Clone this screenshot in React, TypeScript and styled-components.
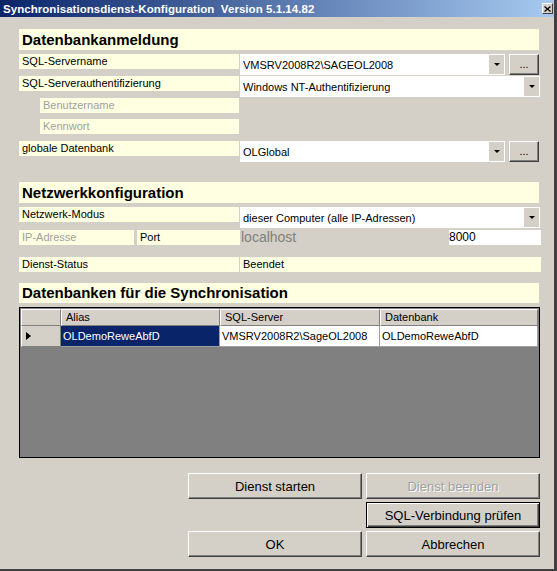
import React from 'react';
import styled, { createGlobalStyle } from 'styled-components';

const GlobalStyle = createGlobalStyle`
  html, body {
    margin: 0;
    padding: 0;
    background: #d4d0c8;
  }
  body {
    font-family: "Liberation Sans", Arial, sans-serif;
  }
  * {
    box-sizing: border-box;
  }
`;

const LABEL_BG = '#ffffe1';

export default function App() {
  return (
    <>
      <GlobalStyle />
      <Window>
        <TitleBar>
          <TitleText>Synchronisationsdienst-Konfiguration&nbsp;&nbsp;Version 5.1.14.82</TitleText>
          <CloseButton>
            <svg width="7" height="6" viewBox="0 0 7 6">
              <path d="M0.5 0.5 L6.5 5.5 M6.5 0.5 L0.5 5.5" stroke="#000" strokeWidth="1.3" />
            </svg>
          </CloseButton>
        </TitleBar>

        <Body>
          <SectionHeader $top={0}>Datenbankanmeldung</SectionHeader>

          <Row $top={4}>
            <FieldLabel $width={220}>SQL-Servername</FieldLabel>
            <ComboBox $width={265} $height={21}>
              <ComboText>VMSRV2008R2\SAGEOL2008</ComboText>
              <DropButton><Arrow /></DropButton>
            </ComboBox>
            <EllipsisButton>...</EllipsisButton>
          </Row>

          <Row $top={1}>
            <FieldLabel $width={220}>SQL-Serverauthentifizierung</FieldLabel>
            <ComboBox $width={300} $height={21}>
              <ComboText>Windows NT-Authentifizierung</ComboText>
              <DropButton><Arrow /></DropButton>
            </ComboBox>
          </Row>

          <Row $top={1} $indent={21}>
            <FieldLabel $width={199} $muted>Benutzername</FieldLabel>
          </Row>

          <Row $top={6} $indent={21}>
            <FieldLabel $width={199} $muted>Kennwort</FieldLabel>
          </Row>

          <Row $top={7}>
            <FieldLabel $width={220}>globale Datenbank</FieldLabel>
            <ComboBox $width={265} $height={21}>
              <ComboText>OLGlobal</ComboText>
              <DropButton><Arrow /></DropButton>
            </ComboBox>
            <EllipsisButton>...</EllipsisButton>
          </Row>

          <SectionHeader $top={20}>Netzwerkkonfiguration</SectionHeader>

          <Row $top={4}>
            <FieldLabel $width={220}>Netzwerk-Modus</FieldLabel>
            <ComboBox $width={300} $height={21}>
              <ComboText>dieser Computer (alle IP-Adressen)</ComboText>
              <DropButton><Arrow /></DropButton>
            </ComboBox>
          </Row>

          <Row $top={2}>
            <FieldLabel $width={115} $muted>IP-Adresse</FieldLabel>
            <FieldLabel $width={103} $gap={2}>Port</FieldLabel>
            <GhostValue>localhost</GhostValue>
            <TextBox>8000</TextBox>
          </Row>

          <Row $top={12}>
            <FieldLabel $width={220}>Dienst-Status</FieldLabel>
            <FieldLabel $width={301}>Beendet</FieldLabel>
          </Row>

          <SectionHeader $top={11} $height={20}>Datenbanken für die Synchronisation</SectionHeader>

          <GridFrame>
            <GridRow>
              <HeaderCell $width={40} />
              <HeaderCell $width={159}>Alias</HeaderCell>
              <HeaderCell $width={160}>SQL-Server</HeaderCell>
              <HeaderCell $width={158}>Datenbank</HeaderCell>
            </GridRow>
            <GridRow>
              <RowHeader>
                <RowMarker />
              </RowHeader>
              <DataCell $width={159} $selected>OLDemoReweAbfD</DataCell>
              <DataCell $width={160}>VMSRV2008R2\SageOL2008</DataCell>
              <DataCell $width={158}>OLDemoReweAbfD</DataCell>
            </GridRow>
          </GridFrame>

          <ButtonGrid>
            <PushButton>Dienst starten</PushButton>
            <PushButton $disabled>Dienst beenden</PushButton>
            <span />
            <PushButton $default>SQL-Verbindung prüfen</PushButton>
            <PushButton>OK</PushButton>
            <PushButton>Abbrechen</PushButton>
          </ButtonGrid>
        </Body>
      </Window>
    </>
  );
}

const Window = styled.div`
  width: 557px;
  height: 571px;
  background: #d4d0c8;
  border-right: 3px solid #404040;
  border-bottom: 2px solid #404040;
  display: flex;
  flex-direction: column;
  overflow: hidden;
`;

const TitleBar = styled.div`
  height: 17px;
  display: flex;
  align-items: center;
  justify-content: space-between;
  padding: 0 1px 0 3px;
  background: linear-gradient(to right, #0a246a, #a6caf0);
`;

const TitleText = styled.div`
  color: #fff;
  font-weight: bold;
  font-size: 11.5px;
  letter-spacing: 0.05px;
  white-space: nowrap;
`;

const CloseButton = styled.div`
  width: 11px;
  height: 11px;
  display: flex;
  align-items: center;
  justify-content: center;
  background: #d4d0c8;
  border: 1px solid;
  border-color: #fff #404040 #404040 #fff;
`;

const Body = styled.div`
  display: flex;
  flex-direction: column;
  padding: 12px 0 0 19px;
`;

const SectionHeader = styled.div<{ $top: number; $height?: number }>`
  width: 520px;
  height: ${(p) => p.$height ?? 21}px;
  margin-top: ${(p) => p.$top}px;
  padding-left: 3px;
  background: ${LABEL_BG};
  font-size: 15px;
  font-weight: bold;
  line-height: ${(p) => p.$height ?? 21}px;
  color: #000;
`;

const Row = styled.div<{ $top: number; $indent?: number }>`
  display: flex;
  align-items: flex-start;
  margin-top: ${(p) => p.$top}px;
  padding-left: ${(p) => p.$indent ?? 0}px;
`;

const FieldLabel = styled.div<{ $width: number; $muted?: boolean; $gap?: number }>`
  width: ${(p) => p.$width}px;
  height: 15px;
  margin-left: ${(p) => p.$gap ?? 0}px;
  margin-right: 1px;
  padding-left: 3px;
  background: ${LABEL_BG};
  font-size: 11px;
  line-height: 15px;
  color: ${(p) => (p.$muted ? '#a0a0a0' : '#000')};
  white-space: nowrap;
`;

const ComboBox = styled.div<{ $width: number; $height: number }>`
  width: ${(p) => p.$width}px;
  height: ${(p) => p.$height}px;
  display: flex;
  align-items: center;
  justify-content: space-between;
  padding: 1px;
  background: #fff;
`;

const ComboText = styled.div`
  padding-left: 2px;
  padding-top: 1px;
  font-size: 11px;
  color: #000;
  white-space: nowrap;
`;

const DropButton = styled.div`
  width: 15px;
  height: 100%;
  display: flex;
  align-items: center;
  justify-content: center;
  background: #d4d0c8;
`;

const Arrow = styled.div`
  width: 0;
  height: 0;
  border-left: 3px solid transparent;
  border-right: 3px solid transparent;
  border-top: 3px solid #000;
`;

const EllipsisButton = styled.div`
  width: 30px;
  height: 21px;
  margin-left: 4px;
  display: flex;
  align-items: flex-end;
  justify-content: center;
  padding-bottom: 4px;
  background: #d4d0c8;
  border: 1px solid;
  border-color: #fff #404040 #404040 #fff;
  box-shadow: inset -1px -1px #808080;
  font-size: 11px;
  line-height: 11px;
  color: #000;
`;

const GhostValue = styled.div`
  width: 208px;
  height: 15px;
  font-size: 14px;
  line-height: 15px;
  color: #808080;
`;

const TextBox = styled.div`
  width: 92px;
  height: 15px;
  background: #fff;
  font-size: 12px;
  line-height: 15px;
  color: #000;
`;

const GridFrame = styled.div`
  width: 521px;
  height: 151px;
  margin-top: 4px;
  padding: 1px;
  border: 1px solid #000;
  background: #808080;
  display: flex;
  flex-direction: column;
`;

const GridRow = styled.div`
  display: flex;
`;

const HeaderCell = styled.div<{ $width: number }>`
  width: ${(p) => p.$width}px;
  height: 17px;
  padding-left: 4px;
  background: #d4d0c8;
  border-top: 1px solid #fff;
  border-left: 1px solid #fff;
  border-right: 1px solid #808080;
  border-bottom: 1px solid #808080;
  font-size: 11px;
  line-height: 15px;
  color: #000;
`;

const RowHeader = styled.div`
  width: 40px;
  height: 21px;
  display: flex;
  align-items: center;
  padding-left: 4px;
  background: #d4d0c8;
  border-left: 1px solid #fff;
  border-right: 1px solid #808080;
  border-bottom: 1px solid #808080;
`;

const RowMarker = styled.div`
  width: 0;
  height: 0;
  border-left: 5px solid #000;
  border-top: 4.5px solid transparent;
  border-bottom: 4.5px solid transparent;
`;

const DataCell = styled.div<{ $width: number; $selected?: boolean }>`
  width: ${(p) => p.$width}px;
  height: 21px;
  padding-left: 2px;
  background: ${(p) => (p.$selected ? '#0a246a' : '#fff')};
  border-right: 1px solid #a0a0a0;
  border-bottom: 1px solid #a0a0a0;
  font-size: 11px;
  line-height: 20px;
  color: ${(p) => (p.$selected ? '#fff' : '#000')};
  white-space: nowrap;
`;

const ButtonGrid = styled.div`
  display: grid;
  grid-template-columns: 174px 174px;
  grid-template-rows: 26px 26px 26px;
  column-gap: 4px;
  row-gap: 3px;
  margin-top: 15px;
  margin-left: 169px;
`;

const PushButton = styled.div<{ $default?: boolean; $disabled?: boolean }>`
  display: flex;
  align-items: center;
  justify-content: center;
  background: #d4d0c8;
  border: 1px solid;
  border-color: ${(p) => (p.$default ? '#000' : '#fff #404040 #404040 #fff')};
  box-shadow: ${(p) =>
    p.$default
      ? 'inset 1px 1px #fff, inset -1px -1px #404040, inset -2px -2px #808080'
      : 'inset -1px -1px #808080'};
  font-size: 13px;
  color: ${(p) => (p.$disabled ? '#a0a0a0' : '#000')};
  text-shadow: ${(p) => (p.$disabled ? '1px 1px #fff' : 'none')};
`;
